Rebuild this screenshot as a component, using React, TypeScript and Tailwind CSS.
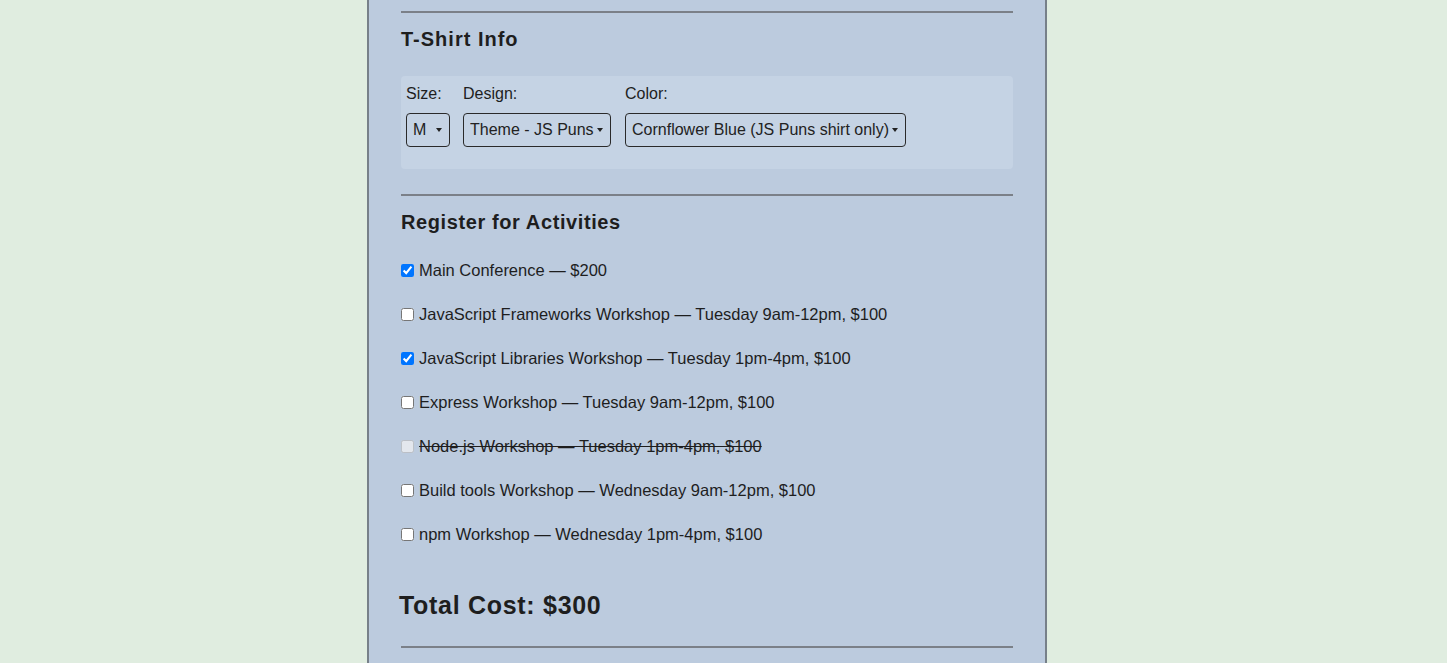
import { ChangeEvent, useState } from "react";

type Activity = {
  id: string;
  label: string;
  checked?: boolean;
  disabled?: boolean;
};

const activities: Activity[] = [
  { id: "all", label: "Main Conference — $200", checked: true },
  { id: "js-frameworks", label: "JavaScript Frameworks Workshop — Tuesday 9am-12pm, $100" },
  { id: "js-libs", label: "JavaScript Libraries Workshop — Tuesday 1pm-4pm, $100", checked: true },
  { id: "express", label: "Express Workshop — Tuesday 9am-12pm, $100" },
  { id: "node", label: "Node.js Workshop — Tuesday 1pm-4pm, $100", disabled: true },
  { id: "build-tools", label: "Build tools Workshop — Wednesday 9am-12pm, $100" },
  { id: "npm", label: "npm Workshop — Wednesday 1pm-4pm, $100" },
];

function Select({
  width,
  value,
  options,
}: {
  width: string;
  value: string;
  options: string[];
}) {
  const [val, setVal] = useState(value);
  return (
    <div className={`relative ${width}`}>
      <select
        value={val}
        onChange={(e: ChangeEvent<HTMLSelectElement>) => setVal(e.target.value)}
        className="block h-[34px] w-full appearance-none rounded-[4px] border border-[#2a2a2a] bg-transparent py-0 pl-[6px] pr-[10px] text-[16px] leading-[32px] text-[#222] outline-none font-['Liberation_Sans',Arial,sans-serif]"
      >
        {options.map((o) => (
          <option key={o} value={o}>
            {o}
          </option>
        ))}
      </select>
      {/* little arrow like the native one */}
      <span className="pointer-events-none absolute right-[8px] top-1/2 -translate-y-1/2 border-x-[3px] border-t-[4px] border-x-transparent border-t-[#222]" />
    </div>
  );
}

export default function App() {
  return (
    <div className="min-h-screen bg-[#e0ede0] font-['Liberation_Sans',Arial,sans-serif] text-[#1e1e1e]">
      <div className="ml-[367px] min-h-screen w-[680px] border-x-2 border-[#778089] bg-[#bccbde] px-8 pt-[11px] pb-10">
        {/* T-Shirt section */}
        <div className="h-[2px] bg-[#7b8088]" />
        <h2 className="mt-[12px] text-[20px] font-bold leading-[28px] tracking-[1px]">T-Shirt Info</h2>

        <div className="mt-[23px] flex gap-[13px] rounded-[4px] bg-[#c5d3e4] px-[5px] pt-[6px] pb-[22px]">
          <div className="flex flex-col gap-[7px]">
            <label className="text-[16px] leading-[24px]">Size:</label>
            <Select width="w-[44px]" value="M" options={["S", "M", "L"]} />
          </div>
          <div className="flex flex-col gap-[7px]">
            <label className="text-[16px] leading-[24px]">Design:</label>
            <Select
              width="w-[148px]"
              value="Theme - JS Puns"
              options={["Theme - JS Puns", "Theme - I ♥ JS"]}
            />
          </div>
          <div className="ml-[1px] flex flex-col gap-[7px]">
            <label className="text-[16px] leading-[24px]">Color:</label>
            <Select
              width="w-[281px]"
              value="Cornflower Blue (JS Puns shirt only)"
              options={[
                "Cornflower Blue (JS Puns shirt only)",
                "Dark Slate Grey (JS Puns shirt only)",
                "Gold (JS Puns shirt only)",
              ]}
            />
          </div>
        </div>

        {/* Activities */}
        <div className="mt-[25px] h-[2px] bg-[#7b8088]" />
        <h2 className="mt-[12px] text-[20px] font-bold leading-[28px] tracking-[0.6px]">
          Register for Activities
        </h2>

        <div className="mt-[22px] flex flex-col gap-[20px]">
          {activities.map((a) => (
            <label
              key={a.id}
              className={`flex items-center gap-[5px] text-[16.5px] leading-[24px] ${
                a.disabled ? "line-through" : ""
              }`}
            >
              <input
                type="checkbox"
                name={a.id}
                defaultChecked={a.checked}
                disabled={a.disabled}
                className="m-0 h-[13px] w-[13px]"
              />
              {a.label}
            </label>
          ))}
        </div>

        <p className="-ml-[2px] mt-[43px] text-[25px] font-bold leading-[32px] tracking-[0.7px]">
          Total Cost: $300
        </p>

        <div className="mt-[25px] h-[2px] bg-[#7b8088]" />
      </div>
    </div>
  );
}
